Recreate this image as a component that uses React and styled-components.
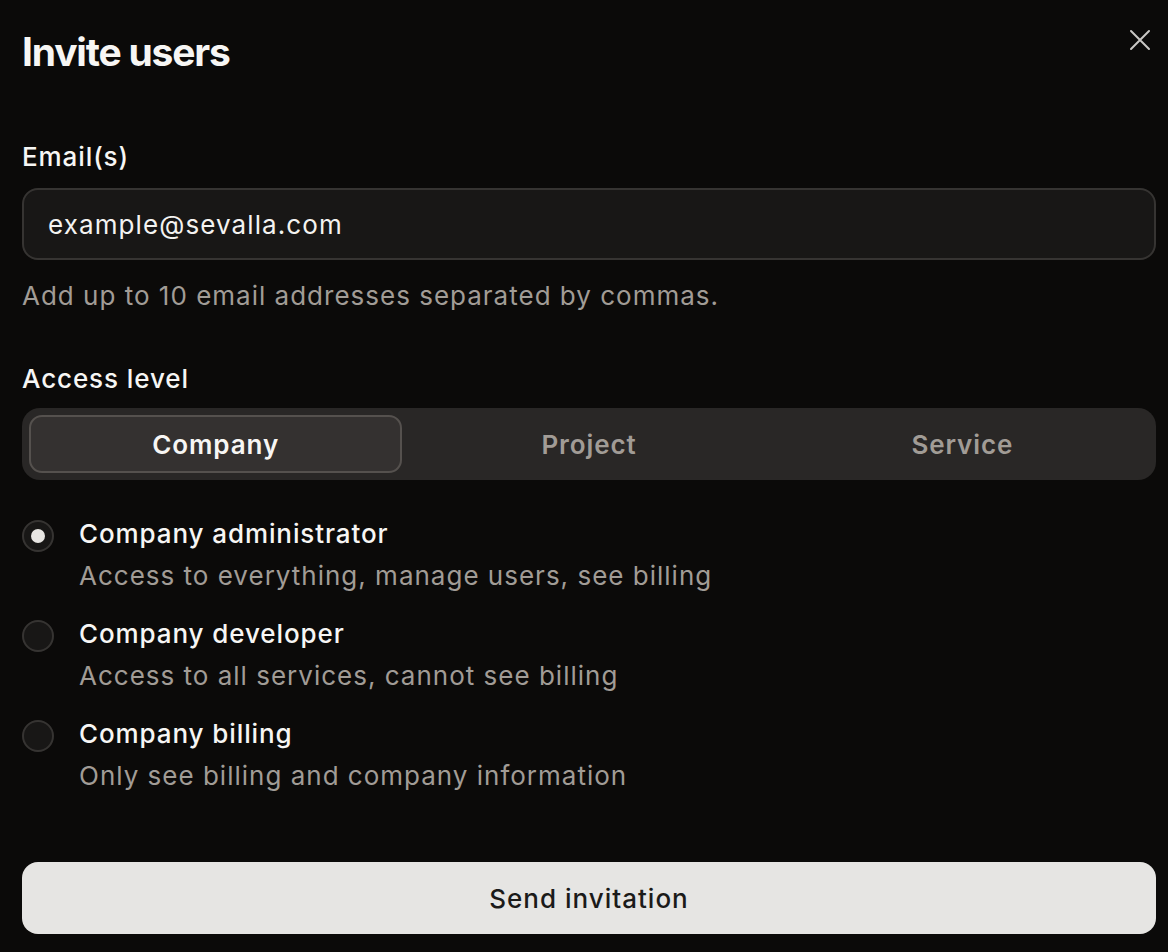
import React, { useState } from 'react';
import styled, { createGlobalStyle } from 'styled-components';

const GlobalStyle = createGlobalStyle`
  html, body {
    margin: 0;
    padding: 0;
    background: #0b0a09;
  }
  body {
    font-family: Inter, "Noto Sans", sans-serif;
    color: #f4f3f1;
    letter-spacing: 1px;
    -webkit-font-smoothing: antialiased;
  }
  * {
    box-sizing: border-box;
  }
`;

const Modal = styled.div`
  width: 1168px;
  min-height: 952px;
  padding: 28px 12px 18px 22px;
  display: flex;
  flex-direction: column;
  background: #0b0a09;
`;

const Header = styled.div`
  display: flex;
  justify-content: space-between;
  align-items: flex-start;
`;

const Title = styled.h1`
  margin: 0;
  font-size: 39px;
  line-height: 48px;
  font-weight: 700;
  letter-spacing: -1.2px;
  color: #f7f6f4;
`;

const CloseButton = styled.button`
  background: none;
  border: none;
  padding: 0;
  margin: 0 4px 0 0;
  width: 24px;
  height: 24px;
  color: #c9c7c4;
  cursor: pointer;
  display: flex;
  align-items: center;
  justify-content: center;
`;

const Label = styled.div`
  margin-top: ${p => p.$top}px;
  font-size: 26px;
  line-height: 32px;
  font-weight: 500;
  letter-spacing: 0.9px;
  color: #f7f6f4;
`;

const Input = styled.input`
  margin-top: 15px;
  width: 100%;
  height: 72px;
  padding: 0 24px;
  background: #181716;
  border: 2px solid #363432;
  border-radius: 16px;
  font-family: inherit;
  font-size: 26px;
  letter-spacing: 1.1px;
  color: #f4f3f1;
  outline: none;
`;

const Hint = styled.div`
  margin-top: 20px;
  font-size: 26px;
  line-height: 32px;
  color: #a19c96;
`;

const Segmented = styled.div`
  margin-top: 13px;
  height: 72px;
  padding: 7px;
  background: #292726;
  border-radius: 18px;
  display: grid;
  grid-template-columns: repeat(3, 1fr);
`;

const Tab = styled.button`
  border: 2px solid ${p => (p.$active ? '#55514e' : 'transparent')};
  background: ${p => (p.$active ? '#343130' : 'transparent')};
  border-radius: 13px;
  font-family: inherit;
  font-size: 26px;
  font-weight: 600;
  letter-spacing: 0.9px;
  color: ${p => (p.$active ? '#f7f6f4' : '#a19c96')};
  cursor: pointer;
`;

const Options = styled.div`
  margin-top: 34px;
  display: flex;
  flex-direction: column;
  gap: 18px;
`;

const Option = styled.label`
  display: flex;
  gap: 25px;
  cursor: pointer;
`;

const Radio = styled.span`
  flex: none;
  margin-top: 6px;
  width: 32px;
  height: 32px;
  border-radius: 50%;
  border: 2px solid #363432;
  background: #181716;
  display: flex;
  align-items: center;
  justify-content: center;

  &::after {
    content: '';
    width: 14px;
    height: 14px;
    border-radius: 50%;
    background: #e8e6e3;
    display: ${p => (p.$checked ? 'block' : 'none')};
  }
`;

const OptionText = styled.div`
  display: flex;
  flex-direction: column;
  gap: 2px;
`;

const OptionTitle = styled.div`
  font-size: 26px;
  line-height: 40px;
  font-weight: 500;
  letter-spacing: 0.9px;
  color: #f7f6f4;
`;

const OptionDesc = styled.div`
  font-size: 26px;
  line-height: 40px;
  color: #a19c96;
`;

const SubmitButton = styled.button`
  margin-top: 66px;
  height: 72px;
  width: 100%;
  border: none;
  border-radius: 16px;
  background: #e6e5e3;
  font-family: inherit;
  font-size: 26px;
  font-weight: 500;
  letter-spacing: 1px;
  color: #1b1a19;
  cursor: pointer;
`;

const tabs = ['Company', 'Project', 'Service'];

const roles = [
  { title: 'Company administrator', desc: 'Access to everything, manage users, see billing' },
  { title: 'Company developer', desc: 'Access to all services, cannot see billing' },
  { title: 'Company billing', desc: 'Only see billing and company information' },
];

export default function App() {
  const [tab, setTab] = useState('Company');
  const [role, setRole] = useState(0);

  return (
    <>
      <GlobalStyle />
      <Modal>
        <Header>
          <Title>Invite users</Title>
          <CloseButton aria-label="Close">
            <svg width="22" height="22" viewBox="0 0 22 22" fill="none" stroke="currentColor" strokeWidth="2" strokeLinecap="round">
              <path d="M2 2 L20 20 M20 2 L2 20" />
            </svg>
          </CloseButton>
        </Header>

        <Label $top={65}>Email(s)</Label>
        <Input defaultValue="example@sevalla.com" />
        <Hint>Add up to 10 email addresses separated by commas.</Hint>

        <Label $top={51}>Access level</Label>
        <Segmented>
          {tabs.map(t => (
            <Tab key={t} $active={tab === t} onClick={() => setTab(t)}>{t}</Tab>
          ))}
        </Segmented>

        <Options>
          {roles.map((r, i) => (
            <Option key={r.title} onClick={() => setRole(i)}>
              <Radio $checked={role === i} />
              <OptionText>
                <OptionTitle>{r.title}</OptionTitle>
                <OptionDesc>{r.desc}</OptionDesc>
              </OptionText>
            </Option>
          ))}
        </Options>

        <SubmitButton>Send invitation</SubmitButton>
      </Modal>
    </>
  );
}
